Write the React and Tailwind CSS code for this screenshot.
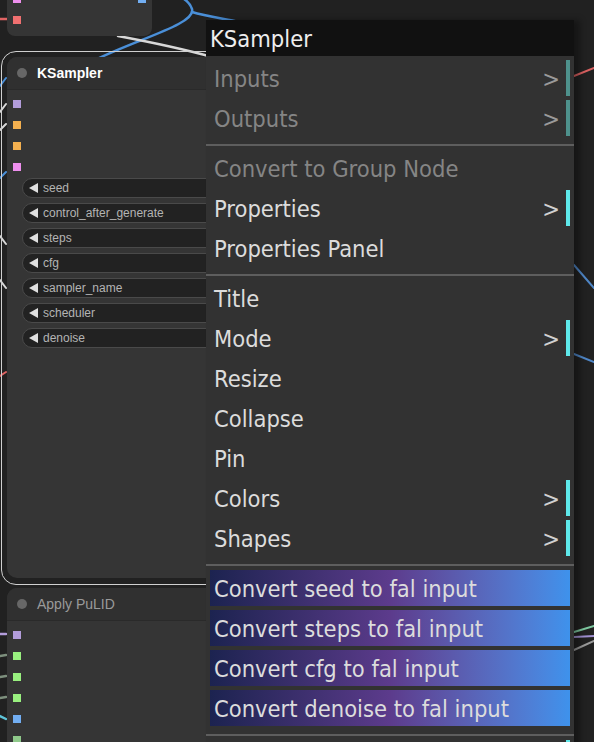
import React from 'react';

const menuFont = { fontFamily: '"DejaVu Sans Condensed", "DejaVu Sans", sans-serif' };
const nodeFont = { fontFamily: '"Liberation Sans", Arial, sans-serif' };

const kSlots = ['#b39ddb', '#f4b04f', '#f4b04f', '#ee8fee'];
const pulidSlots = ['#b39ddb', '#99f07f', '#99f07f', '#99f07f', '#72aef2', '#8fc98a'];
const widgets = ['seed', 'control_after_generate', 'steps', 'cfg', 'sampler_name', 'scheduler', 'denoise'];

const menuGroups = [
  [
    { title: 'Inputs', sub: true, disabled: true },
    { title: 'Outputs', sub: true, disabled: true },
  ],
  [
    { title: 'Convert to Group Node', disabled: true },
    { title: 'Properties', sub: true },
    { title: 'Properties Panel' },
  ],
  [
    { title: 'Title' },
    { title: 'Mode', sub: true },
    { title: 'Resize' },
    { title: 'Collapse' },
    { title: 'Pin' },
    { title: 'Colors', sub: true },
    { title: 'Shapes', sub: true },
  ],
];

const falInputs = ['seed', 'steps', 'cfg', 'denoise'];

function Wires() {
  return (
    <svg className="absolute inset-0" width="594" height="742" fill="none" strokeLinecap="round">
      {/* behind top node / KSampler */}
      <path d="M95 60 C140 38, 196 24, 192 9 C189 0, 180 -4, 172 -6" stroke="#4a8fd8" strokeWidth="2.5" />
      <path d="M192 12 C205 16, 220 18, 240 22" stroke="#4a8fd8" strokeWidth="2.5" />
      <path d="M118 36 C150 42, 180 48, 212 57" stroke="#d8d8d8" strokeWidth="2.5" />
      <path d="M0 19 L12 19" stroke="#e06464" strokeWidth="2.5" />
      <path d="M0 86 L6 78" stroke="#4a8fd8" strokeWidth="2" />
      <path d="M0 112 L6 104" stroke="#d8d8d8" strokeWidth="2" />
      <path d="M0 130 L6 124" stroke="#d8d8d8" strokeWidth="2" />
      <path d="M0 178 L6 172" stroke="#4a8fd8" strokeWidth="2" />
      <path d="M0 236 L6 244" stroke="#d8d8d8" strokeWidth="2" />
      <path d="M0 280 L6 288" stroke="#d8d8d8" strokeWidth="2" />
      <path d="M0 376 L6 372" stroke="#e06464" strokeWidth="2" />
      {/* PuLID inputs */}
      <path d="M0 634 L6 634" stroke="#b39ddb" strokeWidth="2.5" />
      <path d="M0 656 L6 655" stroke="#7d8f7d" strokeWidth="2.5" />
      <path d="M0 677 L6 676" stroke="#7d8f7d" strokeWidth="2.5" />
      <path d="M0 698 L6 697" stroke="#7d8f7d" strokeWidth="2.5" />
      <path d="M0 716 L6 719" stroke="#5ec3d8" strokeWidth="2.5" />
      {/* right of menu */}
      <path d="M574 76 L594 68" stroke="#d86060" strokeWidth="2" />
      <path d="M574 265 L594 288" stroke="#4f86c6" strokeWidth="2" />
      <path d="M574 354 L594 362" stroke="#4f86c6" strokeWidth="2" />
      <path d="M574 632 L594 626" stroke="#7ec8a0" strokeWidth="2" />
      <path d="M574 637 L594 636" stroke="#9f8fd0" strokeWidth="2" />
      <path d="M574 650 L594 641" stroke="#9a9a9a" strokeWidth="2" />
    </svg>
  );
}

function Slot({ color }) {
  return (
    <div className="flex h-[21px] items-center pl-[6px]">
      <div className="h-[8px] w-[8px]" style={{ backgroundColor: color }} />
    </div>
  );
}

function NodeTitle({ title, selected }) {
  return (
    <div className="flex h-[33px] items-center gap-[10px] border-b border-[#2a2a2a] bg-[#303030] pl-[10px]">
      <div className="h-[10px] w-[10px] rounded-full bg-[#676767]" />
      <span className={`text-[14px] ${selected ? 'font-bold text-white' : 'text-[#9a9a9a]'}`}>{title}</span>
    </div>
  );
}

function Widget({ name }) {
  return (
    <div className="ml-[15px] flex h-[20px] items-center gap-[5px] rounded-full border border-[#4a4a4a] bg-[#222] pl-[6px]">
      <svg width="9" height="10" viewBox="0 0 9 10">
        <polygon points="9,0 9,10 0,5" fill="#e0e0e0" />
      </svg>
      <span className="text-[12px] text-[#b4b4b4]">{name}</span>
    </div>
  );
}

function MenuRow({ item }) {
  const text = item.disabled ? 'text-[#858585]' : 'text-[#dcdcdc]';
  const bar = item.disabled ? 'bg-[#4e918c]' : 'bg-[#5ee8ea]';
  return (
    <div className="flex h-[40px] pt-[4px] pl-[8px] pr-[4px]">
      <div className="flex h-[36px] flex-1 items-center">
        {item.title && <span className={`pt-[4px] text-[23.5px] ${text}`}>{item.title}</span>}
        {item.sub && (
          <>
            <span className={`ml-auto pt-[4px] text-[23.5px] ${item.disabled ? 'text-[#9a9a9a]' : 'text-[#d0d0d0]'}`}>
              {item.title ? '>' : ''}
            </span>
            <div className={`ml-[6px] h-[36px] w-[4px] ${bar}`} />
          </>
        )}
      </div>
    </div>
  );
}

function Separator() {
  return <div className="mt-[8px] h-[2px] bg-[#5e5e5e]" />;
}

function ContextMenu() {
  return (
    <div className="absolute left-[206px] top-[20px] w-[368px] bg-[#323232] shadow-[6px_0_6px_rgba(0,0,0,0.35)]" style={menuFont}>
      <div className="flex h-[36px] items-center bg-[#111] pl-[4px] pt-[3px] text-[23.5px] text-[#eee]">KSampler</div>
      {menuGroups.map((group, i) => (
        <div key={i}>
          {i > 0 && <Separator />}
          {group.map((item) => (
            <MenuRow key={item.title} item={item} />
          ))}
        </div>
      ))}
      <Separator />
      <div className="px-[4px]">
        {falInputs.map((name) => (
          <div key={name} className="pt-[4px]">
            <div className="flex h-[36px] items-center bg-linear-to-r from-[#1c2350] via-[#5c3b8c] to-[#3e92ec] pl-[4px] pt-[4px] text-[23.5px] text-[#dcdcdc]">
              Convert {name} to fal input
            </div>
          </div>
        ))}
      </div>
      <Separator />
      {/* next entry continues below the visible area */}
      <MenuRow item={{ title: '', sub: true }} />
    </div>
  );
}

export default function App() {
  return (
    <div className="relative h-[742px] w-[594px] overflow-hidden bg-[#212121]" style={nodeFont}>
      <Wires />

      {/* partial node at top */}
      <div className="absolute left-[7px] top-[-60px] h-[96px] w-[145px] rounded-[8px] bg-[#353535]">
        <div className="absolute left-[6px] top-[55px] h-[8px] w-[8px] bg-[#ee8fee]" />
        <div className="absolute left-[6px] top-[76px] h-[8px] w-[8px] bg-[#f07070]" />
        <div className="absolute right-[6px] top-[55px] h-[8px] w-[8px] bg-[#72aef2]" />
      </div>

      {/* KSampler (selected) */}
      <div className="absolute left-[1px] top-[51px] h-[534px] w-[300px] rounded-[15px] border-[1.5px] border-[#d0d0d0]" />
      <div className="absolute left-[7px] top-[57px] flex h-[521px] w-[290px] flex-col overflow-hidden rounded-[10px] bg-[#353535]">
        <NodeTitle title="KSampler" selected />
        <div className="pt-[3px]">
          {kSlots.map((c, i) => (
            <Slot key={i} color={c} />
          ))}
        </div>
        <div className="mt-[1px] flex flex-col gap-[5px]">
          {widgets.map((w) => (
            <Widget key={w} name={w} />
          ))}
        </div>
      </div>

      {/* Apply PuLID */}
      <div className="absolute left-[7px] top-[588px] flex h-[200px] w-[290px] flex-col overflow-hidden rounded-[10px] bg-[#353535]">
        <NodeTitle title="Apply PuLID" />
        <div className="pt-[3px]">
          {pulidSlots.map((c, i) => (
            <Slot key={i} color={c} />
          ))}
        </div>
      </div>

      <ContextMenu />
    </div>
  );
}
